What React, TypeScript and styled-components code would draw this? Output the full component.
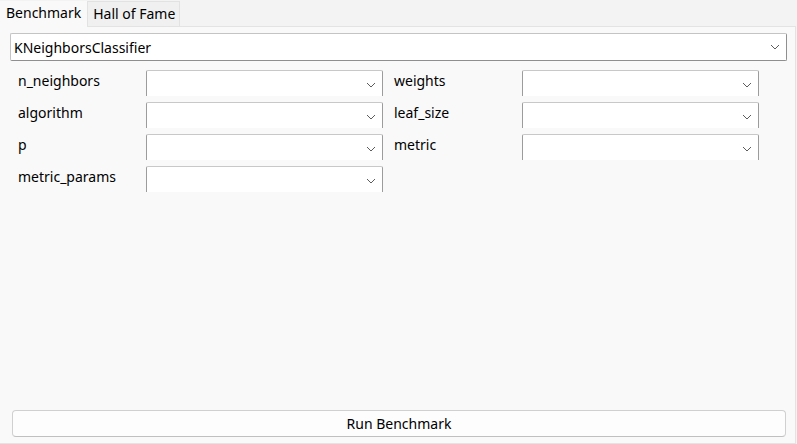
import React from "react";
import styled, { createGlobalStyle } from "styled-components";

const Global = createGlobalStyle`
  html, body { margin: 0; padding: 0; background: #f0f0f0; }
  body { font-family: "Noto Sans", "Open Sans", sans-serif; color: #000; }
  #root { width: 797px; height: 444px; }
`;

const Window = styled.div`
  width: 797px;
  height: 444px;
  display: flex;
  flex-direction: column;
  background: #f3f3f3;
  box-sizing: border-box;
`;

const TabBar = styled.div`
  display: flex;
  height: 26px;
  align-items: flex-end;
`;

const Tab = styled.div<{ $active?: boolean }>`
  height: ${(p) => (p.$active ? "26px" : "25px")};
  box-sizing: border-box;
  padding: ${(p) => (p.$active ? "0 6px 0 6px" : "0 4px 0 5px")};
  font-size: 14px;
  line-height: ${(p) => (p.$active ? "24px" : "24px")};
  display: flex;
  align-items: flex-start;
  background: ${(p) => (p.$active ? "#f9f9f9" : "#f0f0f0")};
  border: ${(p) => (p.$active ? "none" : "1px solid #e2e2e2")};
  border-bottom: none;
  margin-bottom: ${(p) => (p.$active ? "-1px" : "0")};
  position: relative;
  z-index: 1;
  white-space: nowrap;
`;

const Pane = styled.div`
  flex: 1;
  display: flex;
  flex-direction: column;
  background: #f9f9f9;
  border: 1px solid #e3e3e3;
  border-left: none;
  margin-right: 1px;
  padding: 6px 8px 6px 10px;
  box-sizing: border-box;
`;

const Chevron = () => (
  <svg width="10" height="6" viewBox="0 0 10 6">
    <path d="M1 1 L5 5 L9 1" fill="none" stroke="#5c5c5c" strokeWidth="1" />
  </svg>
);

const MainCombo = styled.div`
  height: 28px;
  box-sizing: border-box;
  background: #fff;
  border: 1px solid #c4c4c4;
  border-right-color: #8f8f8f;
  border-bottom-color: #8f8f8f;
  border-radius: 2px;
  display: flex;
  align-items: center;
  justify-content: space-between;
  padding: 0 6px 0 3px;
  font-size: 14px;
`;

const Grid = styled.div`
  display: grid;
  grid-template-columns: 117px 237px 117px 237px;
  column-gap: 11px;
  row-gap: 6px;
  margin-top: 9px;
  padding-left: 8px;
`;

const Label = styled.div`
  height: 26px;
  font-size: 14px;
  line-height: 22px;
  white-space: nowrap;
`;

const Combo = styled.div`
  height: 26px;
  box-sizing: border-box;
  background: #fff;
  border-top: 1px solid #c8c8c8;
  border-left: 1px solid #9c9c9c;
  border-right: 1px solid #9c9c9c;
  border-radius: 2px 2px 0 0;
  display: flex;
  align-items: center;
  justify-content: flex-end;
  padding: 3px 6px 0 0;
`;

const Spacer = styled.div`
  flex: 1;
`;

const RunButton = styled.button`
  height: 27px;
  margin: 0 1px 0 2px;
  background: #fdfdfd;
  border: 1px solid #d0d0d0;
  border-bottom-color: #c0c0c0;
  border-radius: 4px;
  font-family: "Noto Sans", "Open Sans", sans-serif;
  font-size: 14px;
  color: #000;
  padding: 0;
`;

const fields: [string, string | null][] = [
  ["n_neighbors", "weights"],
  ["algorithm", "leaf_size"],
  ["p", "metric"],
  ["metric_params", null],
];

export default function App() {
  return (
    <>
      <Global />
      <Window>
        <TabBar>
          <Tab $active>Benchmark</Tab>
          <Tab>Hall of Fame</Tab>
        </TabBar>
        <Pane>
          <MainCombo>
            <span>KNeighborsClassifier</span>
            <Chevron />
          </MainCombo>
          <Grid>
            {fields.map(([a, b]) => (
              <React.Fragment key={a}>
                <Label>{a}</Label>
                <Combo>
                  <Chevron />
                </Combo>
                {b && (
                  <>
                    <Label>{b}</Label>
                    <Combo>
                      <Chevron />
                    </Combo>
                  </>
                )}
              </React.Fragment>
            ))}
          </Grid>
          <Spacer />
          <RunButton>Run Benchmark</RunButton>
        </Pane>
      </Window>
    </>
  );
}
